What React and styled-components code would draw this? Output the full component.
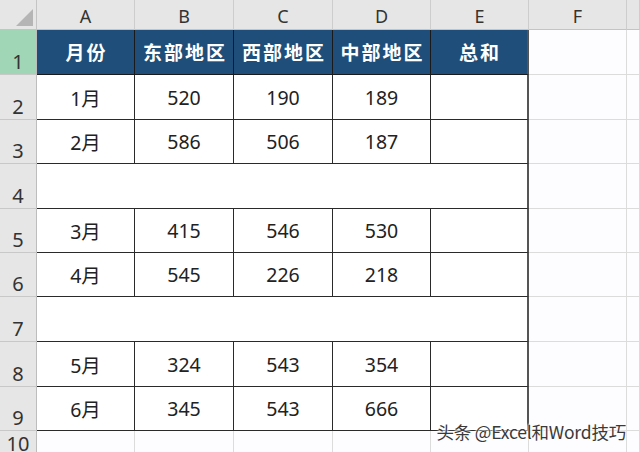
import React from 'react';
import styled, { createGlobalStyle, css } from 'styled-components';

const GlobalStyle = createGlobalStyle`
  html, body {
    margin: 0;
    padding: 0;
    background: #fdfcfe;
  }
  body {
    font-family: "Noto Sans", "Noto Sans CJK SC", sans-serif;
  }
`;

const Sheet = styled.div`
  position: relative;
  width: 640px;
  height: 452px;
  overflow: hidden;
  display: grid;
  grid-template-columns: 37px 98px 99px 99px 98px 98px 98px 1fr;
  grid-template-rows: 30px 45px 45px 44px 45px 44px 44px 45px 45px 44px 1fr;
  background: #fdfcfe;
`;

const Corner = styled.div`
  position: relative;
  background: #e6e6e6;
  border-right: 1px solid #c4c4c4;
  border-bottom: 1px solid #c4c4c4;
  box-sizing: border-box;
  &::after {
    content: '';
    position: absolute;
    right: 3px;
    bottom: 3px;
    width: 0;
    height: 0;
    border-left: 17px solid transparent;
    border-bottom: 17px solid #b5b5b5;
  }
`;

const ColHead = styled.div`
  box-sizing: border-box;
  background: #e6e6e6;
  border-right: 1px solid #cdcdcd;
  border-bottom: 1px solid #c4c4c4;
  display: flex;
  align-items: center;
  justify-content: center;
  font-size: 18px;
  color: #333;
  padding-top: 3px;
`;

const RowHead = styled.div`
  box-sizing: border-box;
  background: ${p => (p.$active ? '#a0d5b6' : '#e6e6e6')};
  border-right: 1px solid #bdbdbd;
  border-bottom: 1px solid #c8c8c8;
  display: flex;
  align-items: flex-end;
  justify-content: center;
  padding-bottom: 0;
  font-size: 20px;
  color: #333;
  line-height: 25px;
`;

const Cell = styled.div`
  box-sizing: border-box;
  display: flex;
  align-items: center;
  justify-content: center;
  font-size: 19.5px;
  color: #222;
  border-right: 1px solid #dcdcdc;
  border-bottom: 1px solid #dcdcdc;
  ${p => p.$span && css`grid-column: span ${p.$span};`}
  ${p =>
    p.$table &&
    css`
      background: #fff;
      border-right-color: #2a2a2a;
      border-bottom-color: #2a2a2a;
    `}
  ${p =>
    p.$head &&
    css`
      background: #1e4e79;
      color: #fff;
      font-size: 19px;
      font-weight: 700;
      border-right-color: #1a1a1a;
      border-bottom-color: #1a1a1a;
      letter-spacing: 2px;
      padding-left: 2px;
    `}
  ${p => p.$edge && css`border-right: 2px solid #555;`}
`;

const Watermark = styled.div`
  position: absolute;
  right: 14px;
  bottom: 8px;
  font-family: "Noto Sans CJK SC", sans-serif;
  font-size: 17.5px;
  color: #3a3a3a;
  text-shadow: 0 0 2px #fff, 0 0 2px #fff, 0 0 3px #fff;
  letter-spacing: -0.2px;
`;

const cols = ['A', 'B', 'C', 'D', 'E', 'F', ''];
const header = ['月份', '东部地区', '西部地区', '中部地区', '总和'];

const rows = [
  ['1月', '520', '190', '189', ''],
  ['2月', '586', '506', '187', ''],
  null,
  ['3月', '415', '546', '530', ''],
  ['4月', '545', '226', '218', ''],
  null,
  ['5月', '324', '543', '354', ''],
  ['6月', '345', '543', '666', ''],
];

const App = () => (
  <>
    <GlobalStyle />
    <Sheet>
      <Corner />
      {cols.map((c, i) => (
        <ColHead key={'c' + i}>{c}</ColHead>
      ))}

      <RowHead $active>1</RowHead>
      {header.map((h, i) => (
        <Cell key={'h' + i} $head $edge={i === 4}>
          {h}
        </Cell>
      ))}
      <Cell />
      <Cell />

      {rows.map((r, ri) => (
        <React.Fragment key={'r' + ri}>
          <RowHead>{ri + 2}</RowHead>
          {r ? (
            r.map((v, ci) => (
              <Cell key={ci} $table $edge={ci === 4}>
                {v}
              </Cell>
            ))
          ) : (
            <Cell $table $span={5} $edge />
          )}
          <Cell />
          <Cell />
        </React.Fragment>
      ))}

      <RowHead>10</RowHead>
      {[0, 1, 2, 3, 4, 5, 6].map(i => (
        <Cell key={'e' + i} />
      ))}

      <Watermark>头条 @Excel和Word技巧</Watermark>
    </Sheet>
  </>
);

export default App;
